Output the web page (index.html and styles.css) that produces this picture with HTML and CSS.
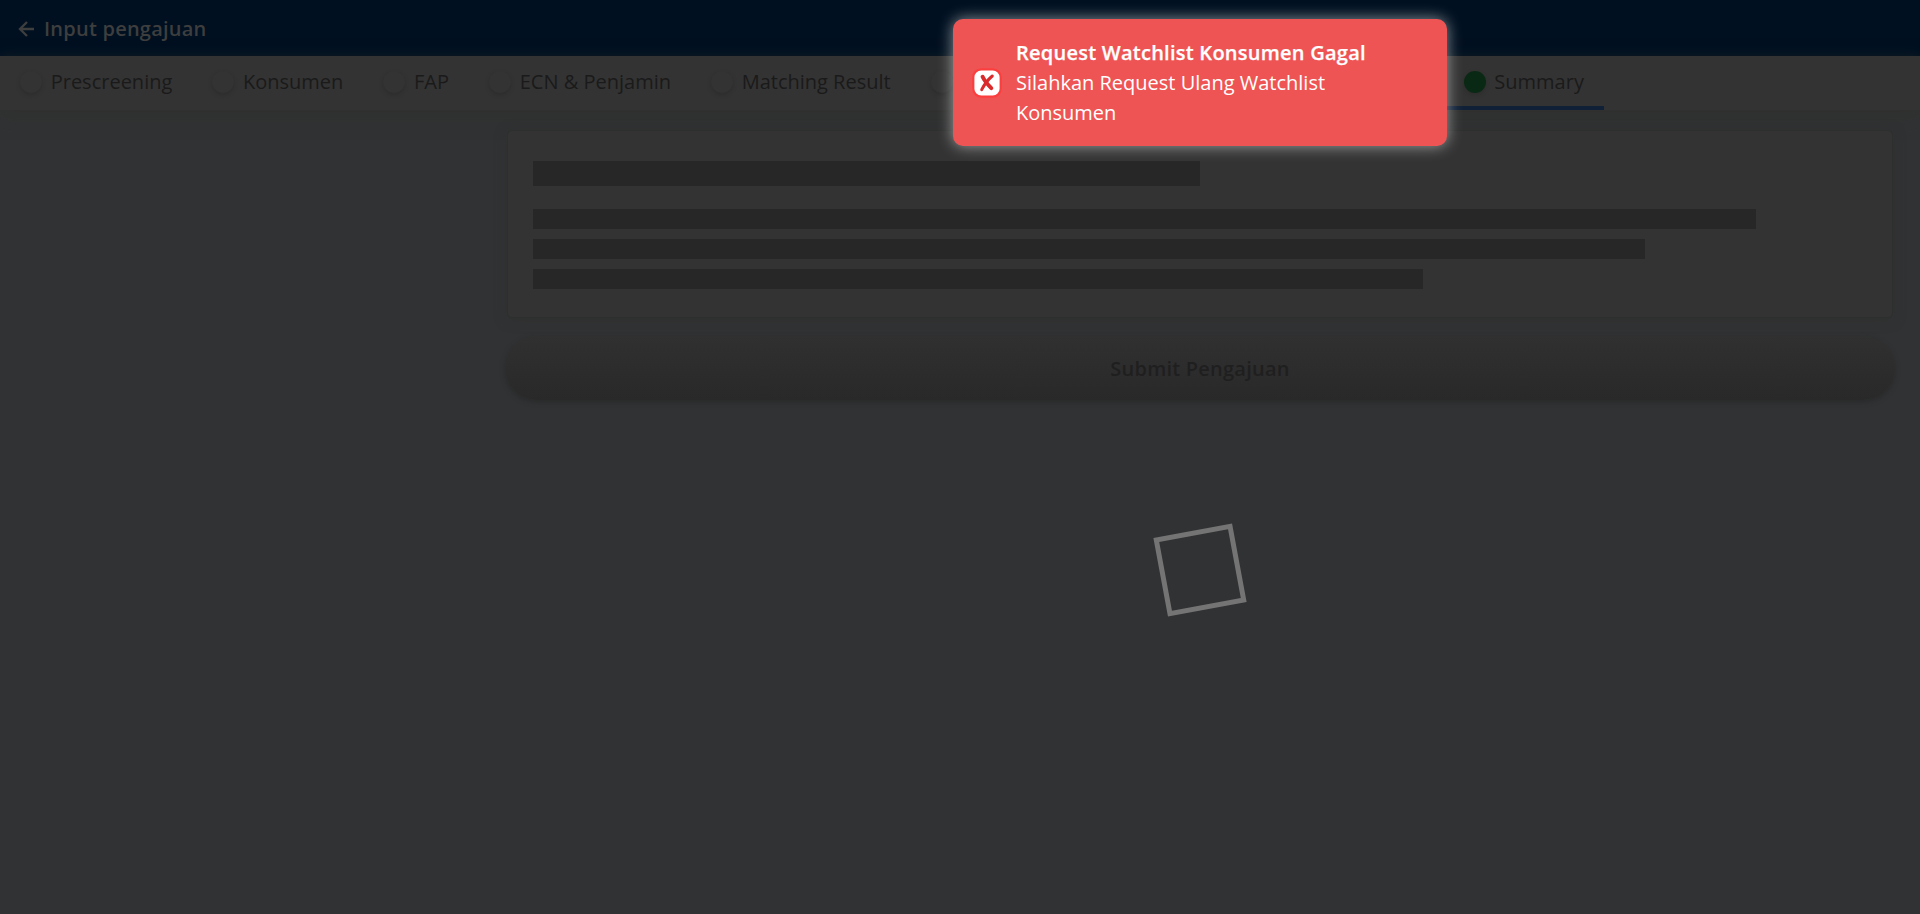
FILE: index.html
```html
<!DOCTYPE html>
<html lang="id">
<head>
<meta charset="utf-8">
<title>Input pengajuan</title>
<link rel="stylesheet" href="styles.css">
</head>
<body>
<header class="topbar">
  <svg class="back" width="16" height="16" viewBox="0 0 16 16" fill="none" stroke="currentColor" stroke-width="2.3"><path d="M16 8H2.5M9 1L2 8l7 7"/></svg>
  <h1 class="title">Input pengajuan</h1>
</header>
<nav class="tabs">
  <div class="tab"><span class="dot"></span>Prescreening</div>
  <div class="tab"><span class="dot"></span>Konsumen</div>
  <div class="tab"><span class="dot"></span>FAP</div>
  <div class="tab"><span class="dot"></span>ECN &amp; Penjamin</div>
  <div class="tab"><span class="dot"></span>Matching Result</div>
  <div class="tab tab-wide"><span class="dot"></span></div>
  <div class="tab tab-active"><span class="dot dot-done"></span>Summary</div>
</nav>
<main class="content">
  <section class="card">
    <div class="bar bar-heading"></div>
    <div class="bar bar-long"></div>
    <div class="bar bar-medium"></div>
    <div class="bar bar-short"></div>
  </section>
  <button class="submit" disabled>Submit Pengajuan</button>
  <div class="spinner"></div>
</main>
<div class="toast">
  <svg class="toast-icon" width="30" height="30" viewBox="0 0 30 30"><rect x="1.3" y="1.3" width="27.4" height="27.4" rx="8" fill="#fff" stroke="#fb3f3f" stroke-width="2.2"/><path d="M10.6 8.8c1.8 4 4.9 7.6 8.7 11.3" fill="none" stroke="#d92b2b" stroke-width="4" stroke-linecap="round"/><path d="M20.3 8c-4.2 3.5-7.6 7.9-10.6 13.6" fill="none" stroke="#d92b2b" stroke-width="3" stroke-linecap="round"/></svg>
  <div class="toast-text"><strong>Request Watchlist Konsumen Gagal</strong><p>Silahkan Request Ulang Watchlist Konsumen</p></div>
</div>
</body>
</html>
```
FILE: styles.css
```css
* { box-sizing: border-box; }
body {
  margin: 0;
  height: 914px;
  overflow: hidden;
  background: #313234;
  color: #1a1a1a;
  font: 20px/30px "Open Sans", sans-serif;
}
.topbar {
  display: flex;
  align-items: center;
  gap: 10px;
  height: 56px;
  padding: 1px 0 0 18px;
  background: #001020;
  color: #3e3e3e;
}
.title { margin: 0; font-size: 20px; font-weight: 600; letter-spacing: .23px; }
.tabs {
  display: flex;
  height: 54px;
  background: #333;
  box-shadow: 0 6px 16px rgba(46, 49, 44, .8);
}
.tab {
  display: flex;
  align-items: center;
  gap: 8.7px;
  padding: 0 20px 2px;
  white-space: nowrap;
}
.tab-wide { width: 533px; }
.tab-active { border-bottom: 4px solid #102036; padding-top: 2px; padding-bottom: 0; }
.dot {
  width: 22px;
  height: 22px;
  border-radius: 50%;
  background: #333;
  box-shadow: 0 2px 5px rgba(0, 0, 0, .14);
}
.dot-done { background: #0a2914; }
.content {
  display: flex;
  flex-direction: column;
  width: 1390px;
  margin: 20px 0 0 505px;
}
.card {
  height: 188px;
  margin: 0 2px;
  padding: 30px 25px;
  border: 1px solid #2d2f2f;
  border-radius: 5px;
  background: #333;
  box-shadow: 0 2px 12px rgba(47, 49, 46, .7);
}
.bar { height: 20px; margin-bottom: 10px; background: #272727; }
.bar-heading { width: 50%; height: 25px; margin-bottom: 23px; }
.bar-long { width: 91.67%; }
.bar-medium { width: 83.33%; }
.bar-short { width: 66.7%; }
.submit {
  height: 64px;
  margin-top: 18px;
  padding: 2px 0 0;
  border: 0;
  border-radius: 32px;
  background: linear-gradient(#303030, #292929);
  box-shadow: 0 2px 5px rgba(38, 39, 37, .75);
  color: #1f1f1f;
  font: 600 20px/30px "Open Sans", sans-serif;
  letter-spacing: .23px;
}
.spinner {
  align-self: center;
  width: 80px;
  height: 80px;
  margin-top: 130px;
  border: 5px solid #747474;
  transform: rotate(-10.5deg);
}
.toast {
  position: absolute;
  top: 19px;
  left: 953px;
  display: flex;
  align-items: center;
  gap: 14px;
  width: 494px;
  height: 127px;
  padding: 0 60px 0 19px;
  border-radius: 10px;
  background: #ee5454;
  box-shadow: 0 0 15px rgba(255, 255, 255, .55);
  color: #fff;
}
.toast-icon { flex: none; }
.toast-text strong { font-weight: 600; letter-spacing: .25px; -webkit-text-stroke: .25px currentColor; }
.toast-text p { margin: 0; }
```
